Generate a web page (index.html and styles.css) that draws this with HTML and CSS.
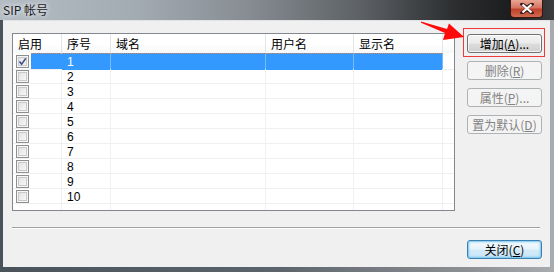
FILE: index.html
```html
<!DOCTYPE html>
<html>
<head>
<meta charset="utf-8">
<link rel="stylesheet" href="styles.css">
</head>
<body>
<div class="window">
  <div class="titlebar">
    <span class="title">SIP 帐号</span>
    <div class="close-x">
      <svg width="14" height="11" viewBox="0 0 14 11"><path d="M2 1 L7 4.5 L12 1 M2 10 L7 6.5 L12 10" stroke="#3a1a18" stroke-width="3.4" fill="none" stroke-linecap="square"/><path d="M2.5 1.5 L11.5 9.5 M11.5 1.5 L2.5 9.5" stroke="#fff" stroke-width="2.2" fill="none"/></svg>
    </div>
  </div>
  <div class="client">
    <div class="main">
      <div class="list">
        <div class="grid header">
          <div class="hc">启用</div><div class="hc">序号</div><div class="hc">域名</div><div class="hc">用户名</div><div class="hc">显示名</div><div class="hc end"></div>
        </div>
        <div class="grid row sel">
          <div class="c c1"><span class="cb on"><svg width="11" height="11" viewBox="0 0 11 11"><path d="M2.5 5.5 L4.6 8.2 L8.8 2.4" stroke="#3b4e86" stroke-width="1.6" fill="none"/></svg></span><span class="lab"></span></div>
          <div class="c">1</div><div class="c"></div><div class="c"></div><div class="c"></div><div class="c end"></div>
        </div>
        <div class="grid row"><div class="c c1"><span class="cb"></span><span class="lab"></span></div><div class="c">2</div><div class="c"></div><div class="c"></div><div class="c"></div><div class="c end"></div></div>
        <div class="grid row"><div class="c c1"><span class="cb"></span><span class="lab"></span></div><div class="c">3</div><div class="c"></div><div class="c"></div><div class="c"></div><div class="c end"></div></div>
        <div class="grid row"><div class="c c1"><span class="cb"></span><span class="lab"></span></div><div class="c">4</div><div class="c"></div><div class="c"></div><div class="c"></div><div class="c end"></div></div>
        <div class="grid row"><div class="c c1"><span class="cb"></span><span class="lab"></span></div><div class="c">5</div><div class="c"></div><div class="c"></div><div class="c"></div><div class="c end"></div></div>
        <div class="grid row"><div class="c c1"><span class="cb"></span><span class="lab"></span></div><div class="c">6</div><div class="c"></div><div class="c"></div><div class="c"></div><div class="c end"></div></div>
        <div class="grid row"><div class="c c1"><span class="cb"></span><span class="lab"></span></div><div class="c">7</div><div class="c"></div><div class="c"></div><div class="c"></div><div class="c end"></div></div>
        <div class="grid row"><div class="c c1"><span class="cb"></span><span class="lab"></span></div><div class="c">8</div><div class="c"></div><div class="c"></div><div class="c"></div><div class="c end"></div></div>
        <div class="grid row"><div class="c c1"><span class="cb"></span><span class="lab"></span></div><div class="c">9</div><div class="c"></div><div class="c"></div><div class="c"></div><div class="c end"></div></div>
        <div class="grid row"><div class="c c1"><span class="cb"></span><span class="lab"></span></div><div class="c">10</div><div class="c"></div><div class="c"></div><div class="c"></div><div class="c end"></div></div>
        <div class="grid filler"><div class="f"></div><div class="f"></div><div class="f"></div><div class="f"></div><div class="f"></div><div class="f end"></div></div>
      </div>
      <div class="side">
        <button class="btn">增加(<u>A</u>)...</button>
        <button class="btn dis">删除(<u>R</u>)</button>
        <button class="btn dis">属性(<u>P</u>)...</button>
        <button class="btn dis">置为默认(<u>D</u>)</button>
      </div>
    </div>
    <div class="sep"></div>
    <div class="footer">
      <button class="btn default">关闭(<u>C</u>)</button>
    </div>
  </div>
  <div class="highlight"></div>
  <svg class="arrow" width="50" height="24" viewBox="420 20 50 24"><polygon points="421,21.5 447,29 449,23.5 464,37 443,40 445,33 421,22.8" fill="#ff0a0a"/></svg>
</div>
</body>
</html>
```

FILE: styles.css
```css
html, body {
  margin: 0;
  padding: 0;
}
body {
  width: 554px;
  height: 272px;
  overflow: hidden;
  font-family: "Noto Sans CJK SC", "Noto Sans", sans-serif;
  font-size: 12px;
}
.window {
  position: relative;
  width: 554px;
  height: 272px;
  display: flex;
  flex-direction: column;
  background: linear-gradient(to right, #4a525a 0%, #5c646b 50%, #8d9195 85%, #a9acaf 100%);
}
.titlebar {
  height: 20px;
  display: flex;
  align-items: flex-start;
  padding-left: 3px;
  background: linear-gradient(to right, #b4bcc4 0%, #a2aab2 25%, #868c92 45%, #5d6165 65%, #2c2e30 82%, #1c1d1e 92%, #3a3c3e 100%);
}
.title {
  line-height: 18px;
  color: #1c1c1c;
  text-shadow: 0 0 4px #e8ecf0, 0 0 6px #e8ecf0;
  margin-top: 1px;
}
.close-x {
  margin-left: auto;
  margin-right: 11px;
  width: 33px;
  height: 18px;
  box-sizing: border-box;
  border: 1px solid #3b1512;
  border-top: none;
  border-radius: 0 0 4px 4px;
  background: linear-gradient(#e9a594 0%, #d57562 45%, #c0412b 55%, #cf6a4e 100%);
  display: flex;
  align-items: center;
  justify-content: center;
}
.client {
  flex: 1;
  margin: 0 4px 5px 3px;
  background: #f0f0f0;
  display: flex;
  flex-direction: column;
  padding: 12px 8px 0 9px;
  border-top: 1px solid #dfe3e7;
}
.main {
  display: flex;
  gap: 12px;
}
.list {
  width: 443px;
  height: 178px;
  box-sizing: border-box;
  border: 1px solid #828790;
  background: #fff;
  display: flex;
  flex-direction: column;
  overflow: hidden;
}
.grid {
  display: grid;
  grid-template-columns: 49px 49px 155px 88px 89px 1fr;
}
.header {
  height: 20px;
  box-sizing: border-box;
  border-bottom: 1px solid #e2e4e7;
  background: linear-gradient(#ffffff 0%, #ffffff 50%, #f7f8f9 100%);
}
.hc {
  border-right: 1px solid #e3e5e8;
  padding-left: 5px;
  line-height: 19px;
  color: #000;
}
.hc.end, .c.end, .f.end {
  border-right: none;
}
.row {
  height: 15px;
  box-sizing: border-box;
}
.c {
  border-right: 1px solid #f0f0f0;
  border-bottom: 1px solid #f0f0f0;
  padding: 2px 0 0 5px;
  font-family: "Liberation Sans", sans-serif;
  font-size: 12px;
  line-height: 12px;
  color: #000;
}
.c.c1 {
  padding: 0;
  display: flex;
  align-items: flex-start;
}
.cb {
  width: 13px;
  height: 13px;
  box-sizing: border-box;
  margin: 1px 0 0 3px;
  border: 1px solid #8e8f8f;
  background: linear-gradient(135deg, #dcdcdc 0%, #f0f0f0 60%, #fafafa 100%);
  box-shadow: inset 0 0 0 1px #f6f6f6, inset 0 0 0 2px #c9c9c9;
  display: flex;
  align-items: center;
  justify-content: center;
}
.cb.on {
  background: linear-gradient(135deg, #e4e4e4 0%, #f4f4f4 100%);
}
.lab {
  flex: 1;
  margin-left: 2px;
  height: 14px;
}
.sel .c {
  border-top: 1px dotted #e2864a;
  margin-top: -1px;
  background: #3399ff;
  color: #fff;
  border-right-color: #7ab9f9;
  border-bottom-color: #3399ff;
}
.sel .c.c1 {
  background: #fff;
  border-top-color: transparent;
  border-right-color: #3399ff;
  border-bottom-color: #f0f0f0;
}
.sel .c.c1 .lab {
  background: #3399ff;
  height: 15px;
  margin-top: -1px;
  border-top: 1px dotted #e2864a;
}
.sel .c.end {
  background: #fff;
  border-top-color: transparent;
  border-bottom-color: #f0f0f0;
}
.filler {
  flex: 1;
}
.f {
  border-right: 1px solid #f0f0f0;
}
.side {
  width: 75px;
  display: flex;
  flex-direction: column;
  gap: 8px;
  padding-top: 1px;
}
.btn {
  width: 75px;
  height: 19px;
  box-sizing: border-box;
  padding: 0;
  border: 1px solid #707070;
  border-radius: 3px;
  background: linear-gradient(#f2f2f2 0%, #ebebeb 48%, #dddddd 52%, #cfcfcf 100%);
  box-shadow: inset 0 0 0 1px rgba(255, 255, 255, 0.75);
  font-family: "Noto Sans CJK SC", "Noto Sans", sans-serif;
  font-size: 12px;
  line-height: 16px;
  color: #000;
  text-align: center;
}
.btn u {
  text-decoration: underline;
  text-underline-offset: 1px;
}
.btn.dis {
  border-color: #adb2b5;
  background: #f4f4f4;
  box-shadow: none;
  color: #838383;
}
.btn.default {
  border-color: #3c7fb1;
  background: linear-gradient(#f4fafd 0%, #e6f3fb 48%, #d4ebf8 52%, #c8e4f5 100%);
  box-shadow: inset 0 0 2px 1px #74c4ef;
}
.sep {
  margin-top: 16px;
  width: 528px;
  border-top: 1px solid #a0a0a0;
  border-bottom: 1px solid #ffffff;
}
.footer {
  margin-top: 11px;
  display: flex;
  justify-content: flex-end;
}
.highlight {
  position: absolute;
  left: 463px;
  top: 28px;
  width: 82px;
  height: 29px;
  box-sizing: border-box;
  border: 1px solid #f03a3a;
}
.arrow {
  position: absolute;
  left: 420px;
  top: 20px;
}
```
